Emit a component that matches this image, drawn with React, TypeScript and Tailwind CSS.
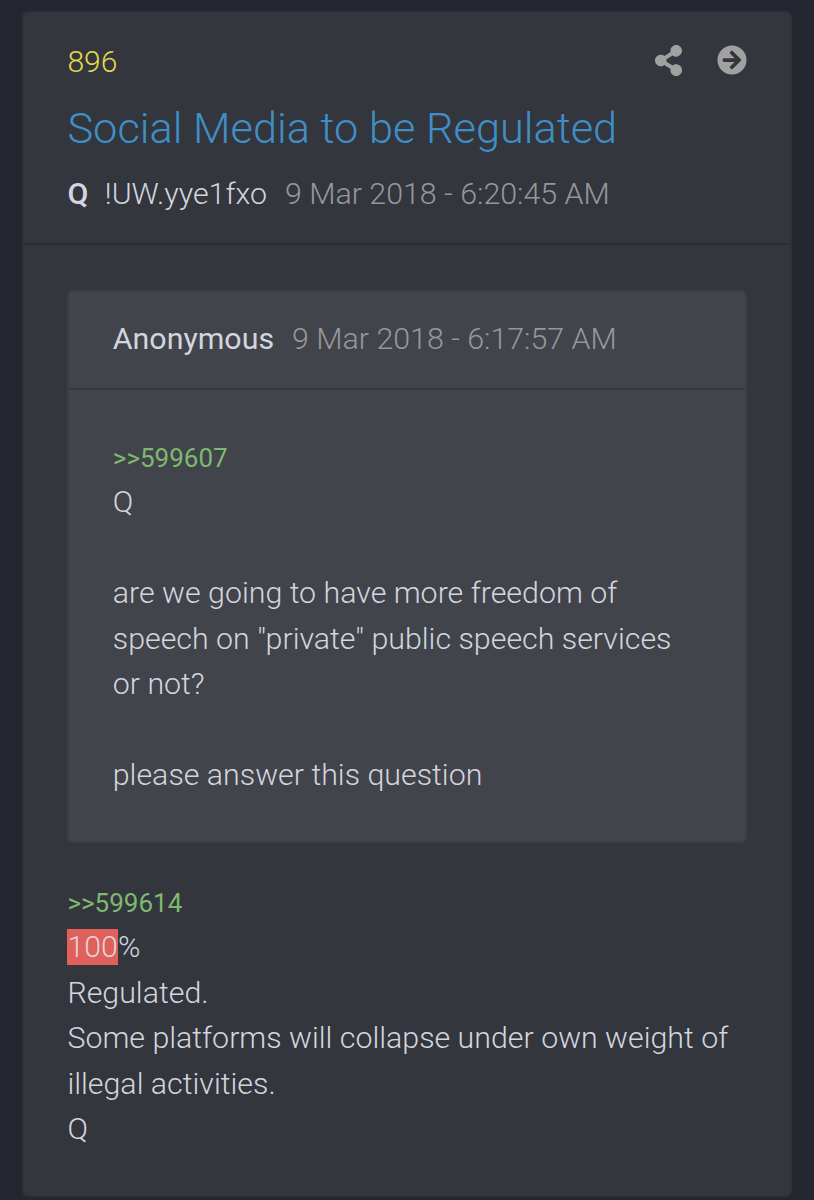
import { FaArrowCircleRight, FaShareAlt } from "react-icons/fa";

interface PostLine {
  text: string;
  highlight?: string;
}

interface PostBodyProps {
  reference: string;
  lines: PostLine[];
}

const quotedLines: PostLine[] = [
  { text: "Q" },
  { text: "" },
  { text: "are we going to have more freedom of speech on \"private\" public speech services or not?" },
  { text: "" },
  { text: "please answer this question" },
];

const replyLines: PostLine[] = [
  { highlight: "100", text: "%" },
  { text: "Regulated." },
  { text: "Some platforms will collapse under own weight of illegal activities." },
  { text: "Q" },
];

function PostBody({ reference, lines }: PostBodyProps) {
  return (
    <div className="text-[30.35px] leading-[45.55px] font-light text-[#d3d5df]">
      <a className="block pt-px text-[26px] leading-[42px] font-normal text-[#7db96f]">{reference}</a>
      {lines.map((line, index) => (
        <p key={index} className="min-h-[45.55px]">
          {line.highlight && (
            <mark className="bg-[#e0605b] pb-px text-[#e3d5da]">{line.highlight}</mark>
          )}
          {line.text}
        </p>
      ))}
    </div>
  );
}

export default function App() {
  return (
    <main className="h-[1200px] overflow-hidden bg-[#24272f] px-[22px] pt-[11px] font-[Roboto,sans-serif]">
      <article className="h-[1186px] rounded-md border-2 border-[#2e3138] bg-[#33363d]">
        <header className="h-[232px] border-b-2 border-[#2b2d35] pr-[43.5px] pl-[43.4px] pt-[26px]">
          <div className="flex h-[44px] items-center justify-between">
            <span className="text-[30px] font-light text-[#e3d94c]">896</span>
            <div className="flex items-center gap-[35px] pb-[2px] text-[#a1a1a1]">
              <FaShareAlt className="h-[31px] w-[27px]" />
              <FaArrowCircleRight className="size-[30px]" />
            </div>
          </div>
          <h1 className="mt-[16px] text-[43.35px] leading-[60px] font-light text-[#3f8fc6]">
            Social Media to be Regulated
          </h1>
          <div className="mt-[13px] flex text-[30.35px] leading-[44px] font-light whitespace-pre">
            <strong className="mr-[16.5px] font-medium text-[#d3d5df]">Q</strong>
            <span className="mr-[18px] text-[#d3d5df]">!UW.yye1fxo</span>
            <time className="text-[#97979a]">9 Mar 2018 - 6:20:45 AM</time>
          </div>
        </header>

        <div className="px-[43.4px] pt-[45px]">
          <section className="h-[553px] rounded-md border-2 border-[#3b3e45] bg-[#41444b]">
            <header className="flex h-[98px] items-center border-b-2 border-[#383a41] pr-[43px] pb-[2px] pl-[43.4px] text-[30.35px] font-light">
              <strong className="mr-[18px] font-normal text-[#d3d5df]">Anonymous</strong>
              <time className="text-[#97979a]">9 Mar 2018 - 6:17:57 AM</time>
            </header>
            <div className="pr-[43px] pl-[43.4px] pt-[46px]">
              <PostBody reference=">>599607" lines={quotedLines} />
            </div>
          </section>
          <div className="pt-[38px]">
            <PostBody reference=">>599614" lines={replyLines} />
          </div>
        </div>
      </article>
    </main>
  );
}
